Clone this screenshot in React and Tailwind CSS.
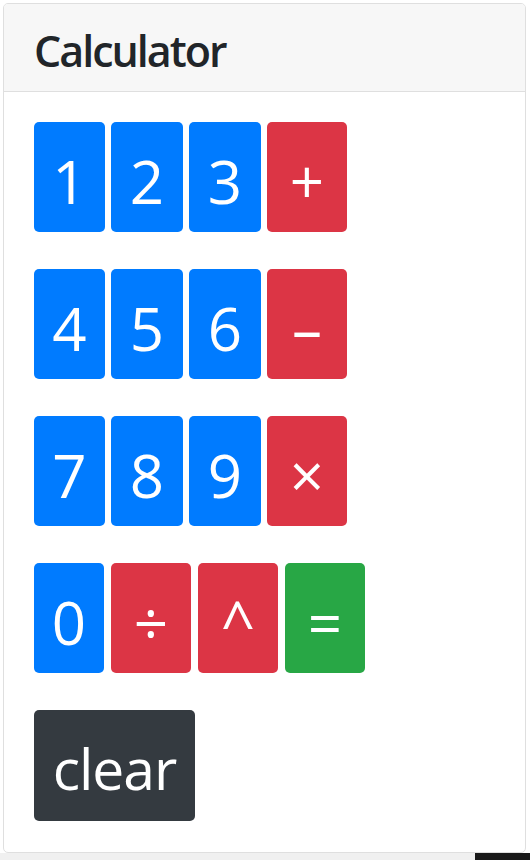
import React from "react";

const BLUE = "bg-[#007bff]";
const RED = "bg-[#dc3545]";
const GREEN = "bg-[#28a745]";

const rows = [
  {
    gap: "gap-[6px]",
    keys: [
      { label: "1", bg: BLUE, w: "w-[71px]" },
      { label: "2", bg: BLUE, w: "w-[72px]" },
      { label: "3", bg: BLUE, w: "w-[72px]" },
      { label: "+", bg: RED, w: "w-[80px]" },
    ],
  },
  {
    gap: "gap-[6px]",
    keys: [
      { label: "4", bg: BLUE, w: "w-[71px]" },
      { label: "5", bg: BLUE, w: "w-[72px]" },
      { label: "6", bg: BLUE, w: "w-[72px]" },
      { label: "–", bg: RED, w: "w-[80px]" },
    ],
  },
  {
    gap: "gap-[6px]",
    keys: [
      { label: "7", bg: BLUE, w: "w-[71px]" },
      { label: "8", bg: BLUE, w: "w-[72px]" },
      { label: "9", bg: BLUE, w: "w-[72px]" },
      { label: "×", bg: RED, w: "w-[80px]" },
    ],
  },
  {
    gap: "gap-[7px]",
    keys: [
      { label: "0", bg: BLUE, w: "w-[70px]" },
      { label: "÷", bg: RED, w: "w-[80px]" },
      { label: "^", bg: RED, w: "w-[80px]" },
      { label: "=", bg: GREEN, w: "w-[80px]" },
    ],
  },
];

function Key({ label, bg, w }) {
  return (
    <button
      type="button"
      className={`${bg} ${w} h-[110px] rounded-[5px] text-white text-[60px] leading-none flex items-center justify-center pt-[8px]`}
    >
      {label}
    </button>
  );
}

export default function App() {
  return (
    <div
      className="w-[530px] h-[860px] bg-white flex flex-col overflow-hidden"
      style={{ fontFamily: '"Open Sans", "Noto Sans", sans-serif' }}
    >
      <div className="flex-1 pt-[3px] pl-[3px] pr-[4px]">
        <div className="h-[850px] border border-[#dfdfdf] rounded-[5px] flex flex-col overflow-hidden">
          <div className="h-[88px] bg-[#f7f7f7] border-b border-[#dfdfdf] flex items-center pl-[30px] pt-[6px]">
            <h3 className="text-[43px] font-semibold text-[#212529] leading-none tracking-[-2px]">
              Calculator
            </h3>
          </div>
          <div className="flex flex-col gap-[37px] pt-[30px] pl-[30px]">
            {rows.map((row, i) => (
              <div key={i} className={`flex ${row.gap}`}>
                {row.keys.map((k) => (
                  <Key key={k.label} {...k} />
                ))}
              </div>
            ))}
            <div className="flex">
              <button
                type="button"
                className="w-[161px] h-[111px] rounded-[5px] bg-[#343a40] text-white text-[57px] tracking-[-1px] leading-none flex items-center justify-center pt-[6px]"
              >
                clear
              </button>
            </div>
          </div>
        </div>
      </div>
      <div className="h-[7px] flex">
        <div className="flex-1 bg-[#f0f0f0]" />
        <div className="w-[55px] bg-[#1a1a1a]" />
      </div>
    </div>
  );
}
